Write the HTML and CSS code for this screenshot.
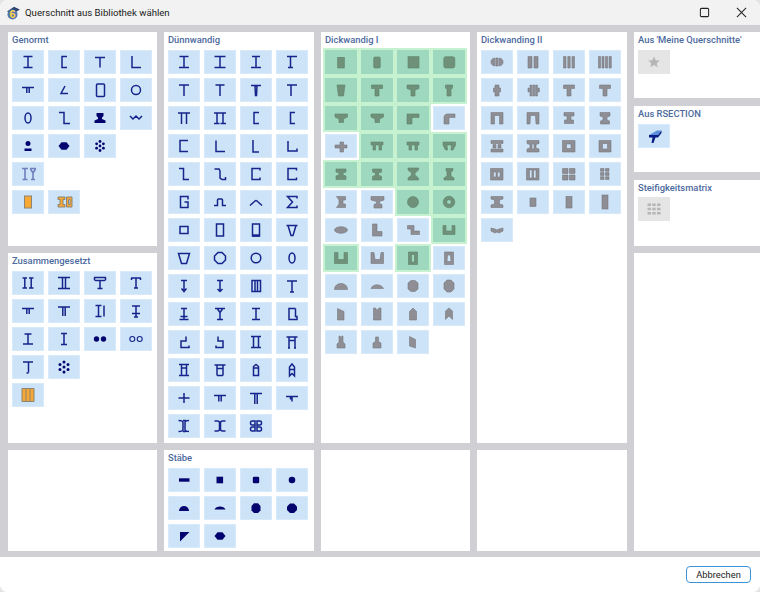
FILE: index.html
```html
<!DOCTYPE html>
<html lang="de">
<head>
<meta charset="utf-8">
<title>Querschnitt aus Bibliothek wählen</title>
<link rel="stylesheet" href="styles.css">
</head>
<body>
<div class="window">
  <header class="titlebar">
    <svg class="appicon" viewBox="0 0 14 14"><path class="cap" d="M1 5.500 8 .8 13.800 3.500 7 8z"/><circle class="badge" cx="6.500" cy="8.500" r="5"/><text class="six" x="6.500" y="12.300">6</text></svg>
    <span class="wintitle">Querschnitt aus Bibliothek wählen</span>
    <span class="controls">
      <svg class="ctl" viewBox="0 0 12 12"><rect x="1.500" y="1.500" width="9" height="9" rx="1.200"/></svg>
      <svg class="ctl" viewBox="0 0 12 12"><path d="M1 1l10 10M11 1 1 11"/></svg>
    </span>
  </header>
  <main class="content">
    <div class="col col-a">
      <section class="panel">
        <h2>Genormt</h2>
        <div class="grid">
          <button class="b"><svg viewBox="0 0 32 24"><path d="M11.500 6.500h9M16 6.500v11M11.500 17.500h9"/></svg></button>
          <button class="b"><svg viewBox="0 0 32 24"><path d="M19 6.500h-5v11h5"/></svg></button>
          <button class="b"><svg viewBox="0 0 32 24"><path d="M11 7.500h10M16 7.500v10"/></svg></button>
          <button class="b"><svg viewBox="0 0 32 24"><path d="M12 6v11.500h9"/></svg></button>
          <button class="b"><svg viewBox="0 0 32 24"><path d="M10 9.500h12M14.800 10v5M17.200 10v5"/></svg></button>
          <button class="b"><svg viewBox="0 0 32 24"><path d="M17 8l-4 7.500h7"/></svg></button>
          <button class="b"><svg viewBox="0 0 32 24"><rect x="12.500" y="6" width="8" height="12.500" rx="1"/></svg></button>
          <button class="b"><svg viewBox="0 0 32 24"><circle cx="16" cy="12" r="4.500"/></svg></button>
          <button class="b"><svg viewBox="0 0 32 24"><ellipse cx="16" cy="12" rx="3" ry="5"/></svg></button>
          <button class="b"><svg viewBox="0 0 32 24"><path d="M11 6.500h5v11h6"/></svg></button>
          <button class="b s"><svg viewBox="0 0 32 24"><path d="M12.500 7h7v3L18 11.500V13l3.500 1.500V17H10.500v-2.500L14 13v-1.500L12.500 10z"/></svg></button>
          <button class="b"><svg viewBox="0 0 32 24"><path d="M10 10l3 3 3-3 3 3 3-3"/></svg></button>
          <button class="b s"><svg viewBox="0 0 32 24"><circle cx="16" cy="9.500" r="2.500"/><rect x="12.500" y="14.500" width="7" height="2.500"/></svg></button>
          <button class="b s"><svg viewBox="0 0 32 24"><path d="M13.500 8.300h5l3 3.700-3 3.700h-5l-3-3.700z"/></svg></button>
          <button class="b s"><svg viewBox="0 0 32 24"><circle cx="16" cy="7.500" r="1.400"/><circle cx="16" cy="12" r="1.400"/><circle cx="16" cy="16.500" r="1.400"/><circle cx="12.600" cy="9.800" r="1.400"/><circle cx="12.600" cy="14.200" r="1.400"/><circle cx="19.400" cy="9.800" r="1.400"/><circle cx="19.400" cy="14.200" r="1.400"/></svg></button>
          <span class="empty"></span>
          <button class="b faint"><svg viewBox="0 0 32 24"><path d="M10 6.500h6M13 6.500v11M10.500 17.500h5M18 6.500h6M18.500 7l2.500 4v6.500M23.500 7 21 11M19 17.500h4"/></svg></button>
          <span class="empty"></span><span class="empty"></span><span class="empty"></span>
          <button class="b o"><svg viewBox="0 0 32 24"><rect x="12.500" y="6" width="7" height="12"/></svg></button>
          <button class="b o"><svg viewBox="0 0 32 24"><path d="M10 7h7v2.500h-2v5h2V17h-7v-2.500h2v-5h-2zM18.500 7H24v10h-5.500zM20.500 9.500v5H22v-5z"/></svg></button>
        </div>
      </section>
      <section class="panel">
        <h2>Zusammengesetzt</h2>
        <div class="grid">
          <button class="b"><svg viewBox="0 0 32 24"><path d="M10.500 7H15M12.800 7v10M10.500 17H15M17 7h4.500M19.200 7v10M17 17h4.500"/></svg></button>
          <button class="b"><svg viewBox="0 0 32 24"><path d="M10 6.500h12M10 17.500h12M14.500 6.500v11M17.500 6.500v11"/></svg></button>
          <button class="b"><svg viewBox="0 0 32 24"><path d="M10 6.500h12M10.500 6.500v3M21.500 6.500v3M11 9.500h10M16 9.500v8M13.500 17.500h5"/></svg></button>
          <button class="b"><svg viewBox="0 0 32 24"><path d="M11 7h10M11.500 7v2M20.500 7v2M16 7v10M14 17h4"/></svg></button>
          <button class="b"><svg viewBox="0 0 32 24"><path d="M10 9.500h12M14.800 10v5M17.200 10v5"/></svg></button>
          <button class="b"><svg viewBox="0 0 32 24"><path d="M10 8h12M14.800 8v9M17.200 8v9"/></svg></button>
          <button class="b"><svg viewBox="0 0 32 24"><path d="M11.500 6.500h6M14.500 6.500v11M11.500 17.500h6M20 6.500v11"/></svg></button>
          <button class="b"><svg viewBox="0 0 32 24"><path d="M12 7h8M16 7v11M12 14.500h8M14 18h4"/></svg></button>
          <button class="b"><svg viewBox="0 0 32 24"><path d="M12.500 7h7M16 7v10M11 17h10"/></svg></button>
          <button class="b"><svg viewBox="0 0 32 24"><path d="M13 6.500h6M16 6.500v11M13 17.500h6"/></svg></button>
          <button class="b s"><svg viewBox="0 0 32 24"><circle cx="12.500" cy="12" r="2.700"/><circle cx="19.500" cy="12" r="2.700"/></svg></button>
          <button class="b thin"><svg viewBox="0 0 32 24"><circle cx="12.300" cy="12" r="2.500"/><circle cx="19.700" cy="12" r="2.500"/></svg></button>
          <button class="b"><svg viewBox="0 0 32 24"><path d="M11 7h10M16.500 7v10.500M14.500 18h2"/></svg></button>
          <button class="b s"><svg viewBox="0 0 32 24"><circle cx="16" cy="7" r="1.500"/><circle cx="16" cy="12" r="1.500"/><circle cx="16" cy="17" r="1.500"/><circle cx="12" cy="9.500" r="1.500"/><circle cx="12" cy="14.500" r="1.500"/><circle cx="20" cy="9.500" r="1.500"/><circle cx="20" cy="14.500" r="1.500"/></svg></button>
          <span class="empty"></span><span class="empty"></span>
          <button class="b o"><svg viewBox="0 0 32 24"><path d="M10 5.500h12v13H10zM14 5.500v13M18 5.500v13"/></svg></button>
        </div>
      </section>
      <section class="panel"></section>
    </div>

    <div class="col col-b">
      <section class="panel">
        <h2>Dünnwandig</h2>
        <div class="grid">
          <button class="b"><svg viewBox="0 0 32 24"><path d="M11.500 6.500h9M16 6.500v11M11 17.500h10"/></svg></button>
          <button class="b"><svg viewBox="0 0 32 24"><path d="M10.500 6.500h11M16 6.500v11M10.500 17.500h11"/></svg></button>
          <button class="b"><svg viewBox="0 0 32 24"><path d="M12 6.500h8M16 6.500v11M11 17.500h10"/></svg></button>
          <button class="b"><svg viewBox="0 0 32 24"><path d="M11 6.500h10M14.500 6.500v11M12 17.500h5"/></svg></button>
          <button class="b"><svg viewBox="0 0 32 24"><path d="M11 7h10M16 7v11"/></svg></button>
          <button class="b"><svg viewBox="0 0 32 24"><path d="M11.500 7h9M16 7v11"/></svg></button>
          <button class="b"><svg viewBox="0 0 32 24"><path d="M11 7.500h10M15 8h2l-.5 9.500h-1z"/></svg></button>
          <button class="b"><svg viewBox="0 0 32 24"><path d="M11 7h10M15 7v11"/></svg></button>
          <button class="b"><svg viewBox="0 0 32 24"><path d="M10 7h12M13.500 7v11M18.500 7v11"/></svg></button>
          <button class="b"><svg viewBox="0 0 32 24"><path d="M10 7h12M13 7v10.500M19 7v10.500M10 17.500h5.500M16.500 17.500H22"/></svg></button>
          <button class="b"><svg viewBox="0 0 32 24"><path d="M19 6.500h-5v11h5"/></svg></button>
          <button class="b"><svg viewBox="0 0 32 24"><path d="M19 6.500h-4.500v11H19"/></svg></button>
          <button class="b"><svg viewBox="0 0 32 24"><path d="M20 6.500h-8v11h8"/></svg></button>
          <button class="b"><svg viewBox="0 0 32 24"><path d="M12 6.500v11h9"/></svg></button>
          <button class="b"><svg viewBox="0 0 32 24"><path d="M13 6v12h6"/></svg></button>
          <button class="b"><svg viewBox="0 0 32 24"><path d="M12 7v10h9v-2.500"/></svg></button>
          <button class="b"><svg viewBox="0 0 32 24"><path d="M11 6.500h4.500v11H21"/></svg></button>
          <button class="b"><svg viewBox="0 0 32 24"><path d="M10.500 7H15l1 2v7l2 1.500h3.500V15"/></svg></button>
          <button class="b"><svg viewBox="0 0 32 24"><path d="M20 8.500v-2h-8v11h8v-2"/></svg></button>
          <button class="b"><svg viewBox="0 0 32 24"><path d="M20.500 8.500v-2h-8.500v11h8.500v-2"/></svg></button>
          <button class="b"><svg viewBox="0 0 32 24"><path d="M20 9.500v-3h-7.500v11H20v-5.500h-3.500"/></svg></button>
          <button class="b"><svg viewBox="0 0 32 24"><path d="M10 15.500h3.500V10c0-.8.5-1 1-1h3c.5 0 1 .2 1 1v5.500H22"/></svg></button>
          <button class="b"><svg viewBox="0 0 32 24"><path d="M10 15.500l5-4.500c.8-.7 1.200-.7 2 0l5 4.500"/></svg></button>
          <button class="b"><svg viewBox="0 0 32 24"><path d="M21 8.500V6.500H11.500l5 5.500-5 5.500H21v-2"/></svg></button>
          <button class="b"><svg viewBox="0 0 32 24"><rect x="12" y="8.500" width="8" height="7"/></svg></button>
          <button class="b"><svg viewBox="0 0 32 24"><rect x="12.500" y="6" width="7" height="12"/></svg></button>
          <button class="b"><svg viewBox="0 0 32 24"><path class="w2" d="M12.500 17.500h7"/><rect x="12.500" y="6" width="7" height="12"/></svg></button>
          <button class="b"><svg viewBox="0 0 32 24"><path d="M10.500 7.500h11M12 7.500l3 10h2l3-10"/></svg></button>
          <button class="b"><svg viewBox="0 0 32 24"><path d="M10.500 7.500h11l-3 10h-5z"/></svg></button>
          <button class="b"><svg viewBox="0 0 32 24"><path d="M14 6.500h4l3.500 3.500v4L18 17.500h-4L10.500 14v-4z"/></svg></button>
          <button class="b"><svg viewBox="0 0 32 24"><circle cx="16" cy="12" r="4.800"/></svg></button>
          <button class="b"><svg viewBox="0 0 32 24"><ellipse cx="16" cy="12" rx="3" ry="5"/></svg></button>
          <button class="b"><svg viewBox="0 0 32 24"><path d="M13 6.500h6M16 6.500v11M13.500 14.500l2.500 3 2.500-3"/></svg></button>
          <button class="b"><svg viewBox="0 0 32 24"><path d="M13 6.500h6M16 6.500v11M13.500 15l2.500 2.500 2.500-2.500"/></svg></button>
          <button class="b"><svg viewBox="0 0 32 24"><path d="M12 6.500h8.500v11H12zM15 6.500v11M17.500 6.500v11"/></svg></button>
          <button class="b"><svg viewBox="0 0 32 24"><path d="M11 7h10M16 7v11M14 18h4"/></svg></button>
          <button class="b"><svg viewBox="0 0 32 24"><path d="M13 6.500h6M16 6.500v11M12.500 14.500h7M11.500 17.500h9"/></svg></button>
          <button class="b"><svg viewBox="0 0 32 24"><path d="M11 6.500h10M13.500 7l2.500 3.500v7M18.500 7 16 10.500M13 17.500h6"/></svg></button>
          <button class="b"><svg viewBox="0 0 32 24"><path d="M12 6.500h8M16 6.500v11M12 17.500h8"/></svg></button>
          <button class="b"><svg viewBox="0 0 32 24"><path d="M19.500 6.500H13v11h8v-3h-1.500V6.500"/></svg></button>
          <button class="b"><svg viewBox="0 0 32 24"><path d="M18 6.500v4.500h-5v6.500h8v-2"/></svg></button>
          <button class="b"><svg viewBox="0 0 32 24"><path d="M14 6.500v4.500h5v6.500h-7v-2"/></svg></button>
          <button class="b"><svg viewBox="0 0 32 24"><path d="M11 6.500h10M13.500 6.500v11M18.500 6.500v11M11 17.500h10"/></svg></button>
          <button class="b"><svg viewBox="0 0 32 24"><path d="M10.500 7h11M13 7v11M19 7v11M12 18h2M18 18h2M13 10.500h6"/></svg></button>
          <button class="b"><svg viewBox="0 0 32 24"><path d="M11 6.500h10M13.500 6.500v11M18.500 6.500v11M11 17.500h10M13.500 10h5"/></svg></button>
          <button class="b"><svg viewBox="0 0 32 24"><path d="M10.500 7h11M13 7v10.500M19 7v10.500M13 17.500h6M13 10.500h6"/></svg></button>
          <button class="b"><svg viewBox="0 0 32 24"><path d="M13.500 17.500v-9l2.500-2 2.500 2v9zM13.500 10h5"/></svg></button>
          <button class="b"><svg viewBox="0 0 32 24"><path d="M13.500 18V9l2.500-3 2.500 3v9l-2.500-2.500zM13.500 11.500h5"/></svg></button>
          <button class="b"><svg viewBox="0 0 32 24"><path d="M10.500 12h11M16 7v10"/></svg></button>
          <button class="b"><svg viewBox="0 0 32 24"><path d="M10 9.500h12M14.800 10v5.500M17.200 10v5.500"/></svg></button>
          <button class="b"><svg viewBox="0 0 32 24"><path d="M10 7.500h12M14.800 7.500v10.500M17.200 7.500v10.500"/></svg></button>
          <button class="b"><svg viewBox="0 0 32 24"><path d="M10 10.500h12M16 10.500v5M14.500 10.500v3"/></svg></button>
          <button class="b"><svg viewBox="0 0 32 24"><path d="M10.500 6.500c3 0 4.500.5 4.500 2v7c0 1.500-1.500 2-4.500 2M21 6.500c-3 0-4 .5-4 2v7c0 1.500 1 2 4 2M15 6.500h3M15 17.500h3"/></svg></button>
          <button class="b"><svg viewBox="0 0 32 24"><path d="M10.500 7h3c1.500 0 2 1 2 2v6c0 1-.5 2-2 2h-3M21.500 7h-3c-1.500 0-2 1-2 2v6c0 1 .5 2 2 2h3M15.500 12h1"/></svg></button>
          <button class="b"><svg viewBox="0 0 32 24"><path d="M15 7h-3c-2 0-2 4 0 4h3v2h-3c-2 0-2 4 0 4h3zM17 7h3c2 0 2 4 0 4h-3v2h3c2 0 2 4 0 4h-3z"/></svg></button>
        </div>
      </section>
      <section class="panel">
        <h2>Stäbe</h2>
        <div class="grid">
          <button class="b s"><svg viewBox="0 0 32 24"><rect x="11" y="10.300" width="10.500" height="3.400"/></svg></button>
          <button class="b s"><svg viewBox="0 0 32 24"><rect x="12.500" y="8.700" width="6.600" height="6.600"/></svg></button>
          <button class="b s"><svg viewBox="0 0 32 24"><rect x="12.800" y="8.700" width="6.400" height="6.600" rx="1.200"/></svg></button>
          <button class="b s"><svg viewBox="0 0 32 24"><circle cx="16" cy="12" r="3.300"/></svg></button>
          <button class="b s"><svg viewBox="0 0 32 24"><path d="M11 15a5 5 0 0 1 10 0z"/></svg></button>
          <button class="b s"><svg viewBox="0 0 32 24"><path d="M10.500 13.500c1.500-4 9.500-4 11 0z"/></svg></button>
          <button class="b s"><svg viewBox="0 0 32 24"><path d="M14 7.200h4l2.500 2.800v4.500L18 17h-4l-2.500-2.500V10z"/></svg></button>
          <button class="b s"><svg viewBox="0 0 32 24"><path d="M14 7.500h4l3 3v3.500l-3 3h-4l-3-3v-3.500z"/></svg></button>
          <button class="b s"><svg viewBox="0 0 32 24"><path d="M12 8h9.500L12 17.500z"/></svg></button>
          <button class="b s"><svg viewBox="0 0 32 24"><path d="M13.500 8.300h5l3 3.700-3 3.700h-5l-3-3.700z"/></svg></button>
        </div>
      </section>
    </div>

    <div class="col col-b">
      <section class="panel">
        <h2>Dickwandig I</h2>
        <div class="grid thick">
          <button class="b sel"><svg viewBox="0 0 32 24"><rect x="12.700" y="7.300" width="6.600" height="10.700"/></svg></button>
          <button class="b sel"><svg viewBox="0 0 32 24"><rect x="12.700" y="7" width="6.600" height="11" rx="1.300"/></svg></button>
          <button class="b sel"><svg viewBox="0 0 32 24"><rect x="11" y="6.700" width="11" height="11.300"/></svg></button>
          <button class="b sel"><svg viewBox="0 0 32 24"><rect x="10.800" y="6.700" width="11" height="11.300" rx="2"/></svg></button>
          <button class="b sel"><svg viewBox="0 0 32 24"><path d="M12 7h8l-1.500 11h-5z"/></svg></button>
          <button class="b sel"><svg viewBox="0 0 32 24"><path d="M10.500 7h11v3.500H18V18h-4v-7.500h-3.500z"/></svg></button>
          <button class="b sel"><svg viewBox="0 0 32 24"><path d="M10 7h12v3.500l-4 1.500v6h-4v-6l-4-1.500z"/></svg></button>
          <button class="b sel"><svg viewBox="0 0 32 24"><path d="M12.500 7h7v3l-1.500 1.500V18h-4v-6.500L12.500 10z"/></svg></button>
          <button class="b sel"><svg viewBox="0 0 32 24"><path d="M10 8h12.500v3l-4 2v3.500h-4.500V13l-4-2z"/></svg></button>
          <button class="b sel"><svg viewBox="0 0 32 24"><path d="M10 8h12.500v3l-4 2v3.500h-4.500V13l-4-2z"/></svg></button>
          <button class="b sel"><svg viewBox="0 0 32 24"><path d="M10 8h12v3.500h-7V18h-5z"/></svg></button>
          <button class="b"><svg viewBox="0 0 32 24"><path d="M11 11c0-2 2-3 3-3h8v3.500h-6V18h-5z"/></svg></button>
          <button class="b"><svg viewBox="0 0 32 24"><path d="M10 11h5V8h3.500v3H22v3h-3.500v4H15v-4h-5z"/></svg></button>
          <button class="b sel"><svg viewBox="0 0 32 24"><path d="M10 8h12v3h-1.500v5H18v-5h-3.500v5H12v-5h-2z"/></svg></button>
          <button class="b sel"><svg viewBox="0 0 32 24"><path d="M10 8h12v3h-1.500v5H18v-5h-3.500v5H12v-5h-2z"/></svg></button>
          <button class="b sel"><svg viewBox="0 0 32 24"><path d="M10 8h12.500v3L20 16h-2l.5-5h-4.500l.5 5h-2L10 11z"/></svg></button>
          <button class="b sel"><svg viewBox="0 0 32 24"><path d="M11 7h10v3l-3 1v2l3 1v3.500H11V14l3-1v-2l-3-1z"/></svg></button>
          <button class="b sel"><svg viewBox="0 0 32 24"><path d="M11.500 7h9v3l-3 1v2l3 1.500V18h-9v-3.500l3-1.500v-2l-3-1z"/></svg></button>
          <button class="b sel"><svg viewBox="0 0 32 24"><path d="M11 6h10.500v2L18 11v2l3.500 3v2H11v-2l3.500-3v-2L11 8z"/></svg></button>
          <button class="b sel"><svg viewBox="0 0 32 24"><path d="M13 6.500h7v2L18 10v4l3 2v2H11v-2l3-2v-4l-1-1.500z"/></svg></button>
          <button class="b"><svg viewBox="0 0 32 24"><path d="M11.500 6.500h9V10H18v4h2.500v3.500h-9l2.500-3.500v-4z"/></svg></button>
          <button class="b"><svg viewBox="0 0 32 24"><path d="M10 6.500h13V10l-4.500 1.500v2l2.500 1V18h-8v-3.500l2.500-1v-2L10 10z"/></svg></button>
          <button class="b sel"><svg viewBox="0 0 32 24"><circle cx="16" cy="12" r="5.500"/></svg></button>
          <button class="b sel"><svg viewBox="0 0 32 24"><path fill-rule="evenodd" d="M16 6.200a5.800 5.800 0 1 0 0 11.600 5.800 5.800 0 0 0 0-11.600zm0 3.500a2.300 2.300 0 1 1 0 4.600 2.300 2.300 0 0 1 0-4.600z"/></svg></button>
          <button class="b"><svg viewBox="0 0 32 24"><ellipse cx="16" cy="12" rx="6.500" ry="3.300"/></svg></button>
          <button class="b"><svg viewBox="0 0 32 24"><path d="M11.500 6h4.500v7.500h5V18h-9.500z"/></svg></button>
          <button class="b"><svg viewBox="0 0 32 24"><path d="M10.500 7.500H17v5.500h5.500V16.500h-8.500V11h-3.500z"/></svg></button>
          <button class="b sel"><svg viewBox="0 0 32 24"><path d="M10 7.500h3v5.500h6V7.500h3v9H10z"/></svg></button>
          <button class="b sel"><svg viewBox="0 0 32 24"><path d="M9.500 6.500h3.500v7h6v-7h3.500V17.500h-13z"/></svg></button>
          <button class="b"><svg viewBox="0 0 32 24"><path d="M10 6.500h3l1 7h5l1-7h2.500V17.500H10z"/></svg></button>
          <button class="b sel"><svg viewBox="0 0 32 24"><path fill-rule="evenodd" d="M11.500 6h9v12.500h-9zm3 2.500v7.500h3V8.500z"/></svg></button>
          <button class="b"><svg viewBox="0 0 32 24"><path fill-rule="evenodd" d="M11.500 6h9v12.500h-9zm3 3-.5 6.500h4l-.5-6.500z"/></svg></button>
          <button class="b"><svg viewBox="0 0 32 24"><path d="M9.500 15.500c0-8 13-8 13 0z"/></svg></button>
          <button class="b"><svg viewBox="0 0 32 24"><path d="M10 14.500c2-5 10-5 12.500 0z"/></svg></button>
          <button class="b"><svg viewBox="0 0 32 24"><path d="M14 6.500h4l3 2.500v6l-3 2.500h-4L11 15V9z"/></svg></button>
          <button class="b"><svg viewBox="0 0 32 24"><path d="M14 6h4l3 3v6l-3 3h-4l-3-3V9z"/></svg></button>
          <button class="b"><svg viewBox="0 0 32 24"><path d="M12.500 6.500l6.500 3V18h-6.500z"/></svg></button>
          <button class="b"><svg viewBox="0 0 32 24"><path d="M12.500 6h2l1.500 2.500L18 6h2v12h-7.500z"/></svg></button>
          <button class="b"><svg viewBox="0 0 32 24"><path d="M12.500 9.500 16 6l3.500 3.500V18h-7z"/></svg></button>
          <button class="b"><svg viewBox="0 0 32 24"><path d="M12.500 9 16 6l3.500 3v8.500L16 14l-3.500 3.500z"/></svg></button>
          <button class="b"><svg viewBox="0 0 32 24"><path d="M14 6h1l1 2 1-2h1v6l2 2v4h-8v-4l2-2z"/></svg></button>
          <button class="b"><svg viewBox="0 0 32 24"><path d="M14.500 7h3v4.500l2.500 1.500V18h-8v-5l2.500-1.500z"/></svg></button>
          <button class="b"><svg viewBox="0 0 32 24"><path d="M12.500 6.500l6 3V18l-6-2z"/></svg></button>
        </div>
      </section>
      <section class="panel"></section>
    </div>

    <div class="col col-b">
      <section class="panel">
        <h2>Dickwanding II</h2>
        <div class="grid thick">
          <button class="b"><svg viewBox="0 0 32 24"><path d="M13.700 8v8c-5-.5-5-7.500 0-8zM14.800 8h2.400v8h-2.400zM18.300 8v8c5-.5 5-7.500 0-8z"/></svg></button>
          <button class="b"><svg viewBox="0 0 32 24"><path d="M11 6.500h4V18h-4zM17 6.500h4V18h-4z"/></svg></button>
          <button class="b"><svg viewBox="0 0 32 24"><path d="M10.500 6.500H13V18h-2.500zM14.800 6.500h2.400V18h-2.400zM19 6.500h2.500V18H19z"/></svg></button>
          <button class="b"><svg viewBox="0 0 32 24"><path d="M9.500 6.500h2V18h-2zM13 6.500h2V18h-2zM16.500 6.500h2V18h-2zM20 6.500h2.300V18H20z"/></svg></button>
          <button class="b"><svg viewBox="0 0 32 24"><path d="M14 7h4v3h1.500v4H18v4h-4v-4h-1.500v-4H14z"/></svg></button>
          <button class="b"><svg viewBox="0 0 32 24"><path d="M13 7h1.800v11H13zM15.800 7h1.800v11h-1.800zM18.600 7h1.800v11h-1.800zM11 10h1.300v4H11zM21 10h1.300v4H21z"/></svg></button>
          <button class="b"><svg viewBox="0 0 32 24"><path d="M10.500 7h11v3.500H18V18h-4v-7.500h-3.500z"/></svg></button>
          <button class="b"><svg viewBox="0 0 32 24"><path d="M10.500 7h11v3.500H18V18h-4v-7.500h-3.500z"/></svg></button>
          <button class="b"><svg viewBox="0 0 32 24"><path fill-rule="evenodd" d="M10 6.500h12V18h-3.500V9.500h-5V18H10z"/></svg></button>
          <button class="b"><svg viewBox="0 0 32 24"><path fill-rule="evenodd" d="M10 6.500h12V18h-3l-.5-8.500h-5L13 18h-3z"/></svg></button>
          <button class="b"><svg viewBox="0 0 32 24"><path d="M11 6.500h10V10h-3v4h2.500v3.500h-9V14H14v-4h-3z"/></svg></button>
          <button class="b"><svg viewBox="0 0 32 24"><path d="M11 6.500h10V10l-3 1v3l2.500 1v3h-9v-3l2.500-1v-3l-3-1z"/></svg></button>
          <button class="b"><svg viewBox="0 0 32 24"><path d="M10 6.500h12v3H10zM10 15h12v3H10zM12 10.500h3V14h-3zM17 10.500h3V14h-3z"/></svg></button>
          <button class="b"><svg viewBox="0 0 32 24"><path d="M10 6.500h12v3l-3 1V14l3 1v3H10v-3l3-1v-3.500l-3-1zM15 10v5h2v-5z"/></svg></button>
          <button class="b"><svg viewBox="0 0 32 24"><path fill-rule="evenodd" d="M9.500 6.500h12.500V18H9.500zm4 3.500v4.500h4.500V10z"/></svg></button>
          <button class="b"><svg viewBox="0 0 32 24"><path fill-rule="evenodd" d="M10 6.500h12V18H10zm3.500 3v5.500h5V9.500z"/></svg></button>
          <button class="b"><svg viewBox="0 0 32 24"><path fill-rule="evenodd" d="M9.500 6.500h12.500V18H9.500zm3 3.500v5h2.500v-5zm4 0v5H19v-5z"/></svg></button>
          <button class="b"><svg viewBox="0 0 32 24"><path fill-rule="evenodd" d="M9.500 6.500h12.500V18H9.500zm3 1.500v8h2.500V8zm4 0v8H19V8z"/></svg></button>
          <button class="b"><svg viewBox="0 0 32 24"><path d="M9.500 6.500H15v5H9.500zM16.500 6.500H22v5h-5.500zM9.500 13H15v5H9.500zM16.500 13H22v5h-5.500z"/></svg></button>
          <button class="b"><svg viewBox="0 0 32 24"><path d="M11.500 6.500H15v2.800h-3.500zM16.500 6.500H20v2.800h-3.500zM11.500 10.600H15v2.800h-3.500zM16.500 10.600H20v2.800h-3.500zM11.500 14.700H15v2.800h-3.500zM16.500 14.700H20v2.800h-3.500z"/></svg></button>
          <button class="b"><svg viewBox="0 0 32 24"><path d="M10 6.500h12v2.500l-3.500 1V14l3.500 1v2.500H10V15l3.500-1v-4L10 9z"/></svg></button>
          <button class="b"><svg viewBox="0 0 32 24"><rect x="13" y="8" width="6" height="8.500"/></svg></button>
          <button class="b"><svg viewBox="0 0 32 24"><rect x="13" y="6.500" width="6" height="11.500"/></svg></button>
          <button class="b"><svg viewBox="0 0 32 24"><rect x="13" y="5" width="6" height="14"/></svg></button>
          <button class="b"><svg viewBox="0 0 32 24"><path d="M10 10l4 1 2 1 2-1 4-1v3l-4 2-2-1-2 1-4-2z"/></svg></button>
        </div>
      </section>
      <section class="panel"></section>
    </div>

    <div class="col col-c">
      <section class="panel">
        <h2>Aus 'Meine Querschnitte'</h2>
        <div class="grid">
          <button class="b off"><svg viewBox="0 0 32 24"><path d="M16 6.500l1.700 3.800 4.100.3-3.100 2.700 1 4-3.700-2.200-3.700 2.200 1-4-3.100-2.700 4.100-.3z"/></svg></button>
        </div>
      </section>
      <section class="panel">
        <h2>Aus RSECTION</h2>
        <div class="grid">
          <button class="b rs"><svg viewBox="0 0 32 24"><path class="rs-top" d="M11 11l8-4.500h4.500L20 11z"/><path class="rs-body" d="M11 11h9l3.500-4.500V9L20 13.500h-2.500L15.500 19h-2l1-5.500H11z"/></svg></button>
        </div>
      </section>
      <section class="panel panel-tight">
        <h2>Steifigkeitsmatrix</h2>
        <div class="grid">
          <button class="b off"><svg viewBox="0 0 32 24"><path d="M9.500 6.500h3.500v2.400H9.500zM14.300 6.500h3.400v2.400h-3.400zM19 6.500h3.500v2.400H19zM9.500 10.800h3.500v2.400H9.500zM14.300 10.800h3.400v2.400h-3.400zM19 10.800h3.500v2.400H19zM9.500 15.100h3.500v2.400H9.500zM14.300 15.100h3.400v2.400h-3.400zM19 15.100h3.500v2.400H19z"/></svg></button>
        </div>
      </section>
      <section class="panel"></section>
    </div>
  </main>
  <footer class="footer">
    <button class="cancel">Abbrechen</button>
  </footer>
</div>
</body>
</html>
```
FILE: styles.css
```css
* { box-sizing: border-box; }
html, body { margin: 0; height: 100%; background: #e4e4e4; }
body { font-family: Roboto, "Liberation Sans", sans-serif; overflow: hidden; }

.window {
  width: 760px;
  height: 592px;
  display: flex;
  flex-direction: column;
  border-radius: 8px;
  overflow: hidden;
  background: #fff;
}

.titlebar {
  height: 25px;
  flex: none;
  display: flex;
  align-items: center;
  padding-left: 6px;
  background: #f2f2f2;
  color: #1a1a1a;
}
.appicon { width: 14px; height: 14px; flex: none; margin-right: 5px; }
.appicon .cap { fill: #2c4470; }
.appicon .badge { fill: #4f76ad; }
.appicon .six { fill: #ffd24a; font: 700 11px "Liberation Sans", sans-serif; text-anchor: middle; }
.wintitle { font-size: 9.6px; }
.controls { margin-left: auto; display: flex; gap: 26px; padding-right: 13px; }
.ctl { width: 11px; height: 11px; fill: none; stroke: #222; stroke-width: 1.1; }

.content {
  flex: 1;
  min-height: 0;
  display: flex;
  gap: 7px;
  padding: 7px 7px 6px 8px;
  background: #d0d0d4;
}
.col { display: grid; gap: 7px; }
.col-a { width: 149px; grid-template-rows: 214px 190px 1fr; }
.col-b { width: 150px; grid-template-rows: 411px 1fr; }
.col-b + .col-b { width: 149px; }
.col-b + .col-b + .col-b { width: 150px; }
.col-c { width: 119px; grid-template-rows: 67px 67px 66px 1fr; }
.col-c .panel:nth-child(-n+2) { margin-bottom: 1px; }

.panel { background: #fff; padding: 0 4px; min-height: 0; }
.panel h2 {
  margin: 0;
  height: 18px;
  line-height: 14px;
  padding-top: 1px;
  font-size: 9.4px;
  font-weight: 500;
  color: #4d6a9e;
  white-space: nowrap;
}
.panel-tight h2 { height: 17px; }

.grid {
  display: grid;
  grid-template-columns: repeat(4, 32px);
  grid-auto-rows: 24px;
  gap: 4px;
}

.b {
  display: block;
  width: 32px;
  height: 24px;
  margin: 0;
  padding: 0;
  border: 0;
  background: #cde4f8;
  box-shadow: inset 0 0 0 1px #d8eafa;
}
.b svg {
  display: block;
  width: 32px;
  height: 24px;
  fill: none;
  stroke: #16258c;
  stroke-width: 1.5;
}
.b .w2 { stroke-width: 2.4; }
.b.thin svg { stroke-width: 1.1; }
.b.s svg { fill: #04046e; stroke: none; }
.b.faint svg { stroke: #6f80bc; stroke-width: 1.6; }
.b.o svg { fill: #f7a733; stroke: #8a8578; stroke-width: 1; }

.thick .b svg { fill: #8e8e94; stroke: #77777e; stroke-width: .6; }
.thick .b.sel {
  background: #9dd8bf;
  box-shadow: 0 0 0 2px #c6f2cf;
}
.thick .b.sel svg { fill: #6f9179; stroke: #5e8069; }

.b.off { background: #e5e5e5; box-shadow: none; }
.b.off svg { fill: #b6b6b6; stroke: none; }
.b.rs svg { stroke: none; }
.b.rs .rs-top { fill: #5f8fd8; }
.b.rs .rs-body { fill: #0a1f86; }

.footer {
  height: 35px;
  flex: none;
  display: flex;
  align-items: center;
  justify-content: flex-end;
  padding-right: 9px;
  background: #fff;
}
.cancel {
  width: 65px;
  height: 17px;
  padding: 0;
  border: 1.5px solid #3d93d6;
  border-radius: 4px;
  background: #fff;
  color: #1a1a1a;
  font: 9.3px Roboto, "Liberation Sans", sans-serif;
  line-height: 14px;
}
```
